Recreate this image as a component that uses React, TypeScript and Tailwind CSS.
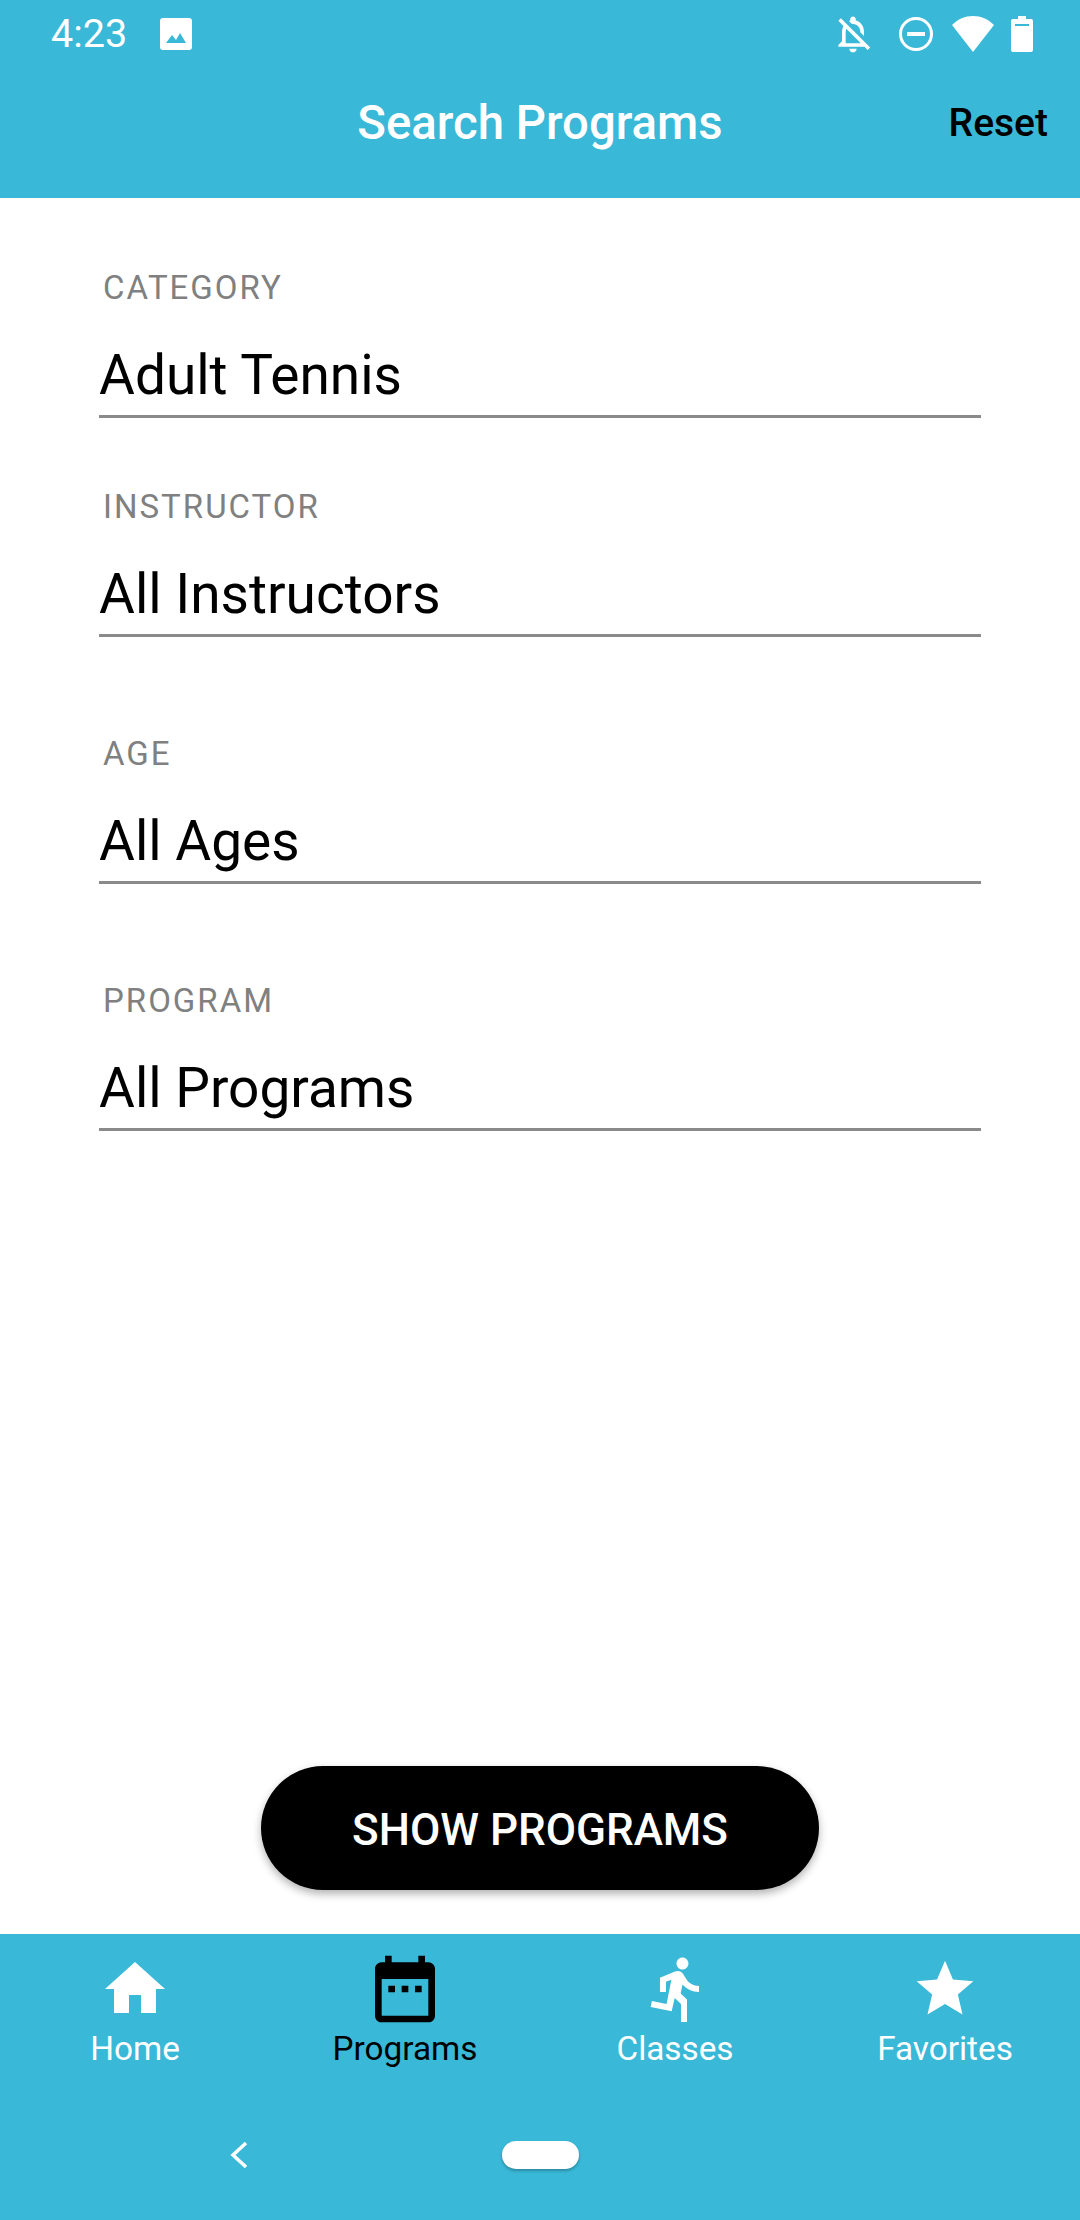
const FONT = "font-['Roboto',sans-serif]";

const FIELDS = [
  { label: "CATEGORY", value: "Adult Tennis", gap: "mt-[70px]" },
  { label: "INSTRUCTOR", value: "All Instructors", gap: "mt-[69px]" },
  { label: "AGE", value: "All Ages", gap: "mt-[97px]" },
  { label: "PROGRAM", value: "All Programs", gap: "mt-[97px]" },
];

function Icon({ d, size, className }: { d: string; size: number; className?: string }) {
  return (
    <svg viewBox="0 0 24 24" width={size} height={size} fill="currentColor" className={className}>
      <path d={d} />
    </svg>
  );
}

const NAV_ITEMS = [
  { label: "Home", size: 72, d: "M10 20v-6h4v6h5v-8h3L12 3 2 12h3v8z" },
  {
    label: "Programs",
    size: 80,
    active: true,
    d: "M19 4h-1V2h-2v2H8V2H6v2H5c-1.11 0-2 .9-2 2v14c0 1.1.89 2 2 2h14c1.1 0 2-.9 2-2V6c0-1.1-.9-2-2-2zm0 16H5V9h14v11zM7 11h2v2H7zm4 0h2v2h-2zm4 0h2v2h-2z",
  },
  {
    label: "Classes",
    size: 72,
    iconClass: "ml-[5px]",
    d: "M13.49 5.48c1.1 0 2-.9 2-2s-.9-2-2-2-2 .9-2 2 .9 2 2 2zm-3.6 13.9l1-4.4 2.1 2v6h2v-7.5l-2.1-2 .6-3c1.3 1.5 3.3 2.5 5.5 2.5v-2c-1.9 0-3.5-1-4.3-2.4l-1-1.6c-.4-.6-1-1-1.7-1-.3 0-.5.1-.8.1l-5.2 2.2v4.7h2v-3.4l1.8-.7-1.6 8.1-4.9-1-.4 2 7 1.4z",
  },
  {
    label: "Favorites",
    size: 68,
    d: "M12 17.27L18.18 21l-1.64-7.03L22 9.24l-7.19-.61L12 2 9.19 8.63 2 9.24l5.46 4.73L5.82 21z",
  },
];

function StatusBar() {
  return (
    <div className="flex h-[68px] items-center justify-between pl-[51px] pr-[47px] text-white">
      <div className="flex items-center">
        <span className="text-[39.5px] leading-none">4:23</span>
        <svg viewBox="0 0 32 32" width={32} height={32} className="ml-[33px]">
          <rect width="32" height="32" rx="3" fill="white" />
          <path d="M6 25l6-8 4 5 4-7 6 10z" fill="#39b8d7" />
        </svg>
      </div>
      <div className="flex items-center">
        <Icon
          size={44}
          d="M12 22c1.1 0 2-.9 2-2h-4c0 1.1.9 2 2 2zm0-15.5c2.49 0 4 2.02 4 4.5v.1l2 2V11c0-3.07-1.63-5.64-4.5-6.32V4c0-.83-.67-1.5-1.5-1.5s-1.5.67-1.5 1.5v.68c-.24.06-.47.15-.69.23l1.64 1.64c.18-.02.36-.05.55-.05zM5.41 3.35L4 4.76l2.81 2.81C6.29 8.57 6 9.74 6 11v5l-2 2v1h14.24l1.74 1.74 1.41-1.41L5.41 3.35zM16 17H8v-6c0-.68.12-1.32.34-1.9L16 16.76V17z"
        />
        <svg viewBox="0 0 36 36" width={36} height={36} className="ml-[23px]">
          <circle cx="18" cy="18" r="15.5" fill="none" stroke="white" strokeWidth="3" />
          <rect x="9" y="16" width="18" height="4" fill="white" />
        </svg>
        <svg viewBox="0 0 42 36" width={42} height={36} className="ml-[18px]">
          <path d="M0 9C6 3 13 0 21 0s15 3 21 9L21 36z" fill="white" />
        </svg>
        <svg viewBox="0 0 22 36" width={22} height={36} className="ml-[17px]">
          <path
            d="M7 0h8v3h5a2 2 0 0 1 2 2v29a2 2 0 0 1-2 2H2a2 2 0 0 1-2-2V5a2 2 0 0 1 2-2h5z"
            fill="white"
          />
          <rect x="4" y="8" width="14" height="2" fill="#39b8d7" />
        </svg>
      </div>
    </div>
  );
}

export default function App() {
  return (
    <div className={`flex h-[2220px] w-[1080px] flex-col bg-white ${FONT}`}>
      <div className="h-[198px] shrink-0 bg-[#39b8d7]">
        <StatusBar />
        <div className="relative mt-[22px] flex h-[66px] items-center justify-center">
          <span className="text-[47.3px] font-medium text-white">Search Programs</span>
          <span className="absolute right-[32px] text-[39px] font-medium text-black">Reset</span>
        </div>
      </div>

      <div className="flex flex-1 flex-col px-[99px]">
        {FIELDS.map((f) => (
          <div key={f.label} className={f.gap}>
            <div className="pl-[4px] text-[33px] leading-[40px] tracking-[2px] text-[#808080]">
              {f.label}
            </div>
            <div className="mt-[35px] h-[75px] border-b-[3px] border-[#8a8a8a] text-[55px] leading-[64px] text-black">
              {f.value}
            </div>
          </div>
        ))}

        <div className="mt-auto mb-[44px] flex justify-center">
          <button className="h-[124px] w-[558px] rounded-full bg-black pt-[3px] text-[44px] font-medium text-white shadow-[0_4px_8px_rgba(0,0,0,0.3)]">
            SHOW PROGRAMS
          </button>
        </div>
      </div>

      <div className="h-[286px] shrink-0 bg-[#39b8d7]">
        <div className="grid grid-cols-4 pt-[15px]">
          {NAV_ITEMS.map((item) => (
            <div
              key={item.label}
              className={`flex flex-col items-center ${item.active ? "text-black" : "text-white"}`}
            >
              <div className="flex h-[80px] items-center">
                <Icon d={item.d} size={item.size} className={item.iconClass} />
              </div>
              <span className="text-[33.3px] leading-[40px]">{item.label}</span>
            </div>
          ))}
        </div>
        <div className="relative mt-[72px] flex h-[28px] items-center justify-center">
          <svg viewBox="0 0 18 28" width={18} height={28} className="absolute left-[230px]">
            <path d="M16 2L3 14l13 12" fill="none" stroke="white" strokeWidth="3.5" />
          </svg>
          <div className="h-[28px] w-[77px] rounded-full bg-white shadow-[0_2px_3px_rgba(0,0,0,0.25)]" />
        </div>
      </div>
    </div>
  );
}
